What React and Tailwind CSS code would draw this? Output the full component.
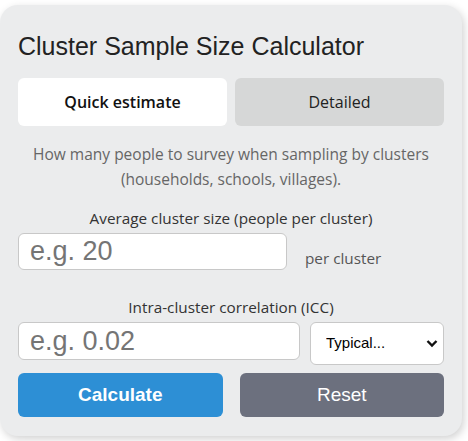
import { useState } from "react";

const ui = { fontFamily: '"Open Sans", "Noto Sans", sans-serif' };
const arial = { fontFamily: '"Liberation Sans", Arial, sans-serif' };

export default function App() {
  const [tab, setTab] = useState("quick");
  const [size, setSize] = useState("");
  const [icc, setIcc] = useState("");

  return (
    <div className="min-h-[441px] w-[468px] overflow-hidden bg-white">
      <div
        className="mt-[5px] w-[462px] rounded-[18px] bg-[#ebeced] px-[18px] pb-[19px] pt-[26px] shadow-[2px_3px_8px_rgba(0,0,0,0.18)]"
        style={ui}
      >
        <h1 className="text-[25px] leading-[30px] text-[#222]" style={arial}>
          Cluster Sample Size Calculator
        </h1>

        <div className="mt-[17px] grid grid-cols-2 gap-2">
          <button
            onClick={() => setTab("quick")}
            className={`h-[48px] rounded-md text-[16px] ${
              tab === "quick" ? "bg-white font-semibold text-[#111]" : "bg-[#d6d7d7] text-[#222]"
            }`}
          >
            Quick estimate
          </button>
          <button
            onClick={() => setTab("detailed")}
            className={`h-[48px] rounded-md text-[16px] ${
              tab === "detailed" ? "bg-white font-semibold text-[#111]" : "bg-[#d6d7d7] text-[#222]"
            }`}
          >
            Detailed
          </button>
        </div>

        <p className="mt-[16px] text-center text-[15.5px] leading-[25px] text-[#666]">
          How many people to survey when sampling by clusters
          <br />
          (households, schools, villages).
        </p>

        <label className="mt-[15px] block text-center text-[15.3px] leading-[22px] text-[#333]">
          Average cluster size (people per cluster)
        </label>
        <div className="mt-[4px] flex items-start">
          <input
            value={size}
            onChange={(e) => setSize(e.target.value)}
            placeholder="e.g. 20"
            className="h-[37px] w-[269px] rounded-md border border-[#c8c8c8] bg-white px-[11px] text-[27px] text-[#222] outline-none placeholder:text-[#757575]"
            style={arial}
          />
          <span className="ml-[18px] mt-[15px] text-[15.3px] leading-[20px] text-[#555]">per cluster</span>
        </div>

        <label className="mt-[26px] block text-center text-[15.3px] leading-[22px] text-[#333]">
          Intra-cluster correlation (ICC)
        </label>
        <div className="mt-[4px] flex items-start gap-[10px]">
          <input
            value={icc}
            onChange={(e) => setIcc(e.target.value)}
            placeholder="e.g. 0.02"
            className="h-[38px] w-[282px] rounded-md border border-[#c8c8c8] bg-white px-[11px] text-[27px] text-[#222] outline-none placeholder:text-[#757575]"
            style={arial}
          />
          <div className="relative flex-1">
            <select
              className="h-[43px] w-full appearance-none rounded-md border border-[#c8c8c8] bg-white pl-[15px] pr-[28px] text-[15px] text-black outline-none"
              style={arial}
              defaultValue=""
            >
              <option value="">Typical...</option>
              <option value="0.01">Low (0.01)</option>
              <option value="0.05">Medium (0.05)</option>
              <option value="0.1">High (0.1)</option>
            </select>
            <svg
              className="pointer-events-none absolute right-[6px] top-[17px]"
              width="12"
              height="9"
              viewBox="0 0 12 9"
            >
              <path d="M1.5 2 L6 6.5 L10.5 2" fill="none" stroke="#111" strokeWidth="2.4" />
            </svg>
          </div>
        </div>

        <div className="mt-[8px] grid grid-cols-2 gap-[17px]">
          <button
            className="h-[44px] rounded-md bg-[#2d8fd5] text-[19px] font-bold text-white"
            style={arial}
          >
            Calculate
          </button>
          <button
            onClick={() => {
              setSize("");
              setIcc("");
            }}
            className="h-[44px] rounded-md bg-[#6c707e] text-[19px] text-white"
            style={arial}
          >
            Reset
          </button>
        </div>
      </div>
    </div>
  );
}
